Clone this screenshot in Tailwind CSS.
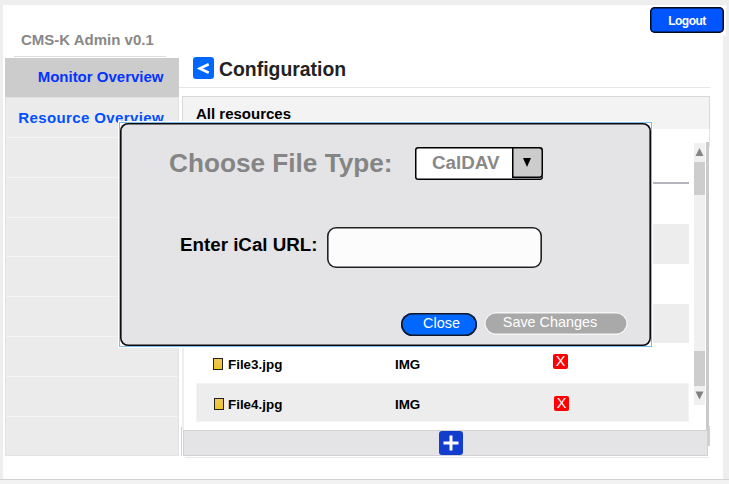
<!DOCTYPE html>
<html lang="en">
<head>
<meta charset="utf-8">
<title>CMS-K Admin</title>
<script src="https://cdn.jsdelivr.net/npm/@tailwindcss/browser@4"></script>
</head>
<body class="relative h-[484px] w-[729px] overflow-hidden bg-[#eeeeee] pt-[5px] pl-[3px] font-['Liberation_Sans',Arial,sans-serif] font-bold leading-none">
<div class="flex h-[474px] w-[720px] bg-white pl-[2px]">
  <aside class="flex w-[174px] flex-col">
    <div class="ml-[9px] flex h-[53px] w-[152px] flex-col justify-between pt-[27px]">
      <h1 class="pl-[7px] text-[15px] whitespace-nowrap text-[#888888]">CMS-K Admin v0.1</h1>
      <div class="h-[2px] border-t border-[#dddddd]"></div>
    </div>
    <nav class="grid h-[398px] grid-rows-[40px_40px_repeat(7,39.8px)_1fr] border border-t-0 border-[#e2e2e2] bg-[#ebebeb] text-right text-[15px]">
      <a class="-mx-px border-b border-[#e2e2e2] bg-[#cccccc] pt-[11px] pr-[15.5px] text-[#0433ff]">Monitor Overview</a>
      <a class="border-b border-[#f4f4f4] pt-[12px] pr-[14px] tracking-[.38px] text-[#0050ff]">Resource Overview</a>
      <span class="border-b border-[#f4f4f4]"></span>
      <span class="border-b border-[#f4f4f4]"></span>
      <span class="border-b border-[#f4f4f4]"></span>
      <span class="border-b border-[#f4f4f4]"></span>
      <span class="border-b border-[#f4f4f4]"></span>
      <span class="border-b border-[#f4f4f4]"></span>
      <span class="border-b border-[#f4f4f4]"></span>
      <span></span>
    </nav>
  </aside>
  <main class="flex w-[531px] flex-col">
    <header class="flex h-[83px] items-start border-b border-[#e5e5e5] pt-[52px] pl-[14px]">
      <svg class="h-[22px] w-[21px]" viewBox="0 0 21 22"><rect width="21" height="22" rx="3" fill="#0068ff"/><path d="M15.700 7.300 6.800 11.500l8.900 4.200" fill="none" stroke="#fff" stroke-width="2.600"/></svg>
      <h2 class="mt-[3px] ml-[5px] text-[19.4px] text-[#222222]">Configuration</h2>
    </header>
    <section class="mt-[8px] ml-[3px] flex h-[362px] flex-col">
      <h3 class="h-[33px] border border-b-0 border-[#d8d8d8] bg-[#f3f3f3] pt-[9px] pl-[13px] text-[15px] text-black">All resources</h3>
      <div class="flex h-[301px] border-l-2 border-[#eeeeee] pl-[12px] text-[13.4px] text-black">
        <div class="flex w-[493px] flex-col">
          <div class="h-[55px] border-b-2 border-[#b5b3bb]"></div>
          <div class="h-[40px]"></div>
          <div class="h-[40px] bg-[#ededed]"></div>
          <div class="h-[40px]"></div>
          <div class="h-[39px] bg-[#ededed]"></div>
          <div class="grid h-[40px] grid-cols-[17px_15px_167px_158px_1fr] items-center">
            <span></span><i class="mt-[1px] h-[12px] w-[10px] border border-[#222222] bg-linear-to-b from-[#efc85a] to-[#efc21c]"></i><span class="mt-[3px]">File3.jpg</span><span class="mt-[3px]">IMG</span>
            <span class="mb-[3px] flex h-[15px] w-[15px] items-center justify-center rounded-[2px] bg-[#ff0000] text-[14.5px] font-normal text-white">X</span>
          </div>
          <div class="grid h-[39px] grid-cols-[17px_15px_167px_158px_1fr] items-center border border-[#f3f3f3] bg-[#ededed]">
            <span></span><i class="mt-[2px] h-[12px] w-[10px] border border-[#222222] bg-linear-to-b from-[#efc85a] to-[#efc21c]"></i><span class="mt-[4px] -ml-px">File4.jpg</span><span class="mt-[4px] -ml-px">IMG</span>
            <span class="mt-px flex h-[15px] w-[15px] items-center justify-center rounded-[2px] bg-[#ff0000] text-[14.5px] font-normal text-white">X</span>
          </div>
        </div>
        <div class="mt-[14px] ml-[5px] flex h-[262px] w-[11px] flex-col items-center bg-[#f0f0f0]">
          <svg class="h-[19px] w-[11px]" viewBox="0 0 11 19"><path d="M5.500 5 9.500 13h-8z" fill="#858585"/></svg>
          <div class="h-[33px] w-full bg-[#cdcdcd]"></div>
          <div class="grow"></div>
          <div class="h-[35px] w-full bg-[#cdcdcd]"></div>
          <svg class="h-[19px] w-[11px]" viewBox="0 0 11 19"><path d="M5.500 13.500 9.500 5.500h-8z" fill="#808080"/></svg>
        </div>
        <div class="mt-[13px] ml-[1px] h-[288px] w-[3px] bg-[#cacaca]"></div>
        <div class="h-[18px] w-px bg-[#e4e4e4]"></div>
      </div>
      <div class="-ml-px flex h-[26px]">
        <div class="-mt-[3px] h-[29px] w-px bg-[#d1d1d4]"></div>
        <footer class="ml-[1px] flex h-[26px] w-[525px] items-center border border-[#d1d1d4] bg-[#e4e4e6] pl-[255px]">
          <svg class="h-[24px] w-[24px]" viewBox="0 0 24 24"><rect width="24" height="24" rx="3" fill="#133dcc"/><path d="M12 4.500v15M4.500 12h15" stroke="#fff" stroke-width="3"/></svg>
        </footer>
        <div class="-mt-[4px] h-[20px] w-[2px] bg-[#d0d0d3]"></div>
      </div>
      <div class="mt-px ml-[3px] h-px bg-[#e9e9e9]"></div>
    </section>
  </main>
</div>
<div class="-ml-[3px] h-[5px] border-t border-[#d2d2d2] bg-[#f2f2f2]"></div>

<div class="absolute top-[5px] right-[3px] h-[31px] w-[78px] bg-white pt-[2px] pl-[2px]">
  <button class="h-[26px] w-[74px] rounded-[5px] bg-[#0055ff] pt-px text-[12px] tracking-[-.5px] text-white inset-shadow-[0_0_0_1.5px_#050b1c]">Logout</button>
</div>

<div class="absolute top-[122px] left-[119px] h-[225px] w-[533px] border border-[#7dbbe6] bg-white shadow-[0_0_0_1px_#fff]">
  <div class="flex h-full flex-col rounded-[8px] bg-[#e4e4e6] p-[2px] inset-shadow-[0_0_0_1.6px_#0b0b10]">
    <div class="flex h-[102px] pt-[22px] pl-[47px]">
      <label class="mt-[3px] w-[246px] text-[26.2px] whitespace-nowrap text-[#858585]">Choose File Type:</label>
      <div class="flex h-[33px] w-[128px] rounded-[3px] bg-white inset-shadow-[0_0_0_1.5px_#000]">
        <span class="w-[97px] pt-[7px] pl-[17px] text-[18.8px] text-[#888888]">CalDAV</span>
        <span class="flex h-[31px] w-[31px] items-center justify-center rounded-r-[4px] bg-[#cccccc] pr-px pb-px inset-shadow-[0_0_0_1.5px_#000]"><svg class="h-[9px] w-[8px]" viewBox="0 0 8 9"><path d="M0 0h8L4 9z"/></svg></span>
      </div>
    </div>
    <div class="flex h-[85px] pl-[58px]">
      <label class="mt-[9px] w-[147px] text-[18.75px] whitespace-nowrap text-black">Enter iCal URL:</label>
      <div class="h-[41px] w-[215px] rounded-[9px] bg-[#fcfcfc] inset-shadow-[0_0_0_1.6px_#222222]"></div>
    </div>
    <div class="flex pl-[279px] text-[14.4px] font-normal text-white">
      <button class="mt-px h-[23px] w-[76px] rounded-full bg-[#0068ff] pb-[3px] pl-[5px] leading-none inset-shadow-[0_0_0_1.6px_#101828]">Close</button>
      <button class="ml-[7px] h-[23px] w-[144px] rounded-full bg-[#a9a9a9] pr-[12px] pb-[3px] leading-none inset-shadow-[0_0_0_1.6px_#f6f6f6]">Save Changes</button>
    </div>
  </div>
</div>
</body>
</html>
